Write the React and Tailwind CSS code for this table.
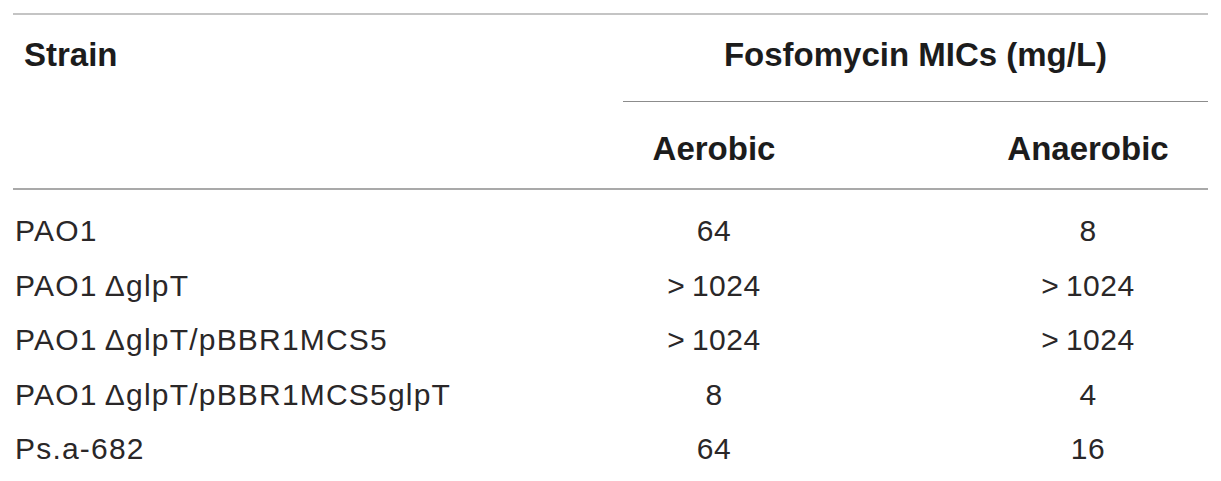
const rows = [
  { strain: 'PAO1', aerobic: '64', anaerobic: '8' },
  { strain: 'PAO1\u2009ΔglpT', aerobic: '>\u20091024', anaerobic: '>\u20091024' },
  { strain: 'PAO1\u2009ΔglpT/pBBR1MCS5', aerobic: '>\u20091024', anaerobic: '>\u20091024' },
  { strain: 'PAO1\u2009ΔglpT/pBBR1MCS5glpT', aerobic: '8', anaerobic: '4' },
  { strain: 'Ps.a-682', aerobic: '64', anaerobic: '16' },
]

export default function App() {
  return (
    <main
      className="w-[1221px] h-[481px] bg-white px-[13px] pt-[13px] text-[#2a2728] overflow-hidden"
      style={{ fontFamily: '"Liberation Sans", Arial, Helvetica, sans-serif' }}
    >
      <div className="border-t-2 border-[#c4c4c4]">
        {/* Header */}
        <div className="grid grid-cols-[610px_182px_163px_240px] border-b-2 border-[#a9a9a9] text-[33px] font-bold leading-[36px] text-[#1c1c1c]">
          <div className="row-span-2 pt-[22px] pl-[11px]">Strain</div>
          <div className="col-span-3 h-[87px] pt-[22px] text-center border-b-[1.5px] border-[#8c8c8c]">
            Fosfomycin MICs (mg/L)
          </div>
          <div className="h-[86px] pt-[29px] text-center">Aerobic</div>
          <div />
          <div className="pt-[29px] text-center">Anaerobic</div>
        </div>

        {/* Body */}
        <div className="pt-[14px] text-[30px] leading-[54.5px]">
          {rows.map((r) => (
            <div key={r.strain} className="grid grid-cols-[610px_182px_163px_240px]">
              <div className="pl-[2px] whitespace-nowrap tracking-[1.2px]">{r.strain}</div>
              <div className="text-center tracking-[0.5px]">{r.aerobic}</div>
              <div />
              <div className="text-center tracking-[0.5px]">{r.anaerobic}</div>
            </div>
          ))}
        </div>
      </div>
    </main>
  )
}
